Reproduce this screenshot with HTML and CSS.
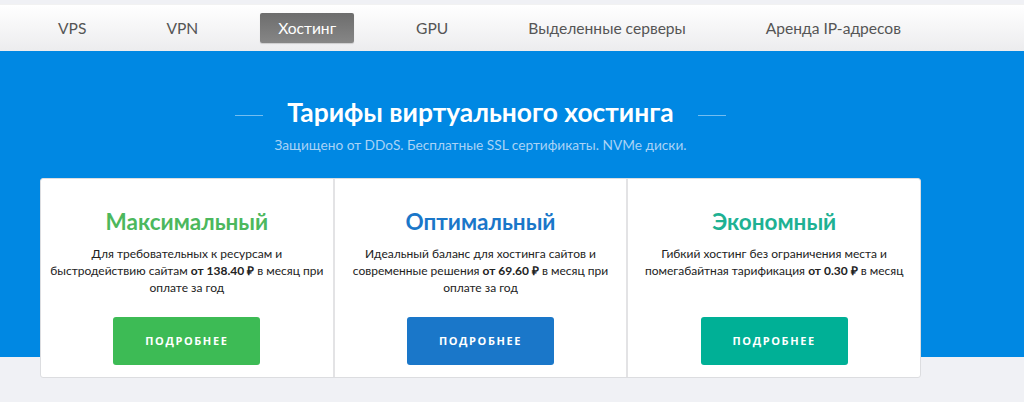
FILE: index.html
```html
<!DOCTYPE html>
<html lang="ru">
<head>
<meta charset="utf-8">
<link rel="stylesheet" href="styles.css">
</head>
<body>
<header class="nav">
  <a class="nav-item">VPS</a>
  <a class="nav-item">VPN</a>
  <a class="nav-item active">Хостинг</a>
  <a class="nav-item">GPU</a>
  <a class="nav-item">Выделенные серверы</a>
  <a class="nav-item">Аренда IP-адресов</a>
</header>
<section class="hero">
  <div class="hero-inner">
    <h1 class="title"><span class="dash"></span>Тарифы виртуального хостинга<span class="dash"></span></h1>
    <p class="subtitle">Защищено от DDoS. Бесплатные SSL сертификаты. NVMe диски.</p>
  </div>
</section>
<section class="plans-wrap">
  <div class="plans">
    <div class="plan">
      <h2 class="plan-name green">Максимальный</h2>
      <p class="plan-desc">Для требовательных к ресурсам и быстродействию сайтам <b>от 138.40 ₽</b> в месяц при оплате за год</p>
      <a class="btn btn-green">ПОДРОБНЕЕ</a>
    </div>
    <div class="plan">
      <h2 class="plan-name blue">Оптимальный</h2>
      <p class="plan-desc">Идеальный баланс для хостинга сайтов и современные решения <b>от 69.60 ₽</b> в месяц при оплате за год</p>
      <a class="btn btn-blue">ПОДРОБНЕЕ</a>
    </div>
    <div class="plan">
      <h2 class="plan-name teal">Экономный</h2>
      <p class="plan-desc">Гибкий хостинг без ограничения места и помегабайтная тарификация <b>от 0.30 ₽</b> в месяц</p>
      <a class="btn btn-teal">ПОДРОБНЕЕ</a>
    </div>
  </div>
</section>
</body>
</html>
```
FILE: styles.css
```css
html, body {
  margin: 0;
  padding: 0;
}
body {
  font-family: Lato, "Open Sans", sans-serif;
  background: #f0f1f5;
  width: 1024px;
  height: 402px;
  overflow: hidden;
}
.nav {
  margin-top: 4px;
  height: 47px;
  box-sizing: border-box;
  background: linear-gradient(#ffffff, #ececee);
  border-top: 1px solid #f2f2f2;
  display: flex;
  align-items: center;
  padding-left: 40px;
  gap: 44px;
}
.nav-item {
  font-size: 15.6px;
  color: #555;
  padding: 0 18px;
  height: 30px;
  line-height: 30px;
  border-radius: 2px;
  white-space: nowrap;
}
.nav-item.active {
  background: linear-gradient(#6d6d6d, #868686);
  color: #fff;
  box-shadow: 0 1px 1px rgba(0,0,0,0.15);
}
.hero {
  background: #0088e3;
  height: 306px;
}
.hero-inner {
  width: 881px;
  margin-left: 40px;
  padding-top: 45px;
  text-align: center;
}
.title {
  margin: 0;
  color: #fff;
  font-size: 26.4px;
  font-weight: 700;
  line-height: 32px;
  display: flex;
  justify-content: center;
  align-items: center;
  gap: 24px;
}
.dash {
  display: inline-block;
  width: 28px;
  height: 1px;
  background: rgba(255,255,255,0.45);
  margin-top: 6px;
}
.subtitle {
  margin: 8px 0 0;
  color: #a9d3f6;
  font-size: 13.7px;
  line-height: 18px;
}
.plans-wrap {
  margin-top: -179px;
  padding-left: 40px;
}
.plans {
  width: 881px;
  height: 200px;
  display: flex;
  background: #fff;
  border: 1px solid #dcdde0;
  border-radius: 3px;
  box-sizing: border-box;
  overflow: hidden;
}
.plan {
  flex: 1;
  display: flex;
  flex-direction: column;
  align-items: center;
  padding: 28px 6px 0;
}
.plan + .plan {
  border-left: 2px solid #e3e3e5;
}
.plan-name {
  margin: 0;
  font-size: 22.5px;
  font-weight: 700;
  line-height: 30px;
}
.green { color: #4cb85d; }
.blue { color: #1a77c9; }
.teal { color: #1eb193; }
.plan-desc {
  margin: 8px 0 0;
  font-size: 12px;
  line-height: 17px;
  color: #222;
  text-align: center;
  height: 51px;
}
.plan-desc b { font-weight: 700; }
.btn {
  margin-top: 21px;
  width: 147px;
  height: 48px;
  line-height: 48px;
  text-align: center;
  border-radius: 3px;
  color: #fff;
  font-family: "Open Sans", sans-serif;
  font-weight: 700;
  font-size: 11px;
  letter-spacing: 1.6px;
}
.btn-green { background: #3dbb55; }
.btn-blue { background: #1a77c9; }
.btn-teal { background: #00b096; }
```
